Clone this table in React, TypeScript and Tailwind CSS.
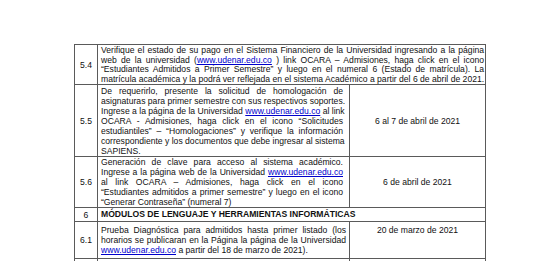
import React from "react";

type Kids = { children?: React.ReactNode };

// enlace azul subrayado como en el documento
const Url = ({ children }: Kids) => (
  <span className="text-[#0000cc] underline decoration-[0.5px] underline-offset-1">{children}</span>
);

// linea justificada (todas menos la ultima del parrafo)
const J = ({ children }: Kids) => (
  <div className="whitespace-nowrap text-justify [text-align-last:justify]">{children}</div>
);

const L = ({ children }: Kids) => <div className="whitespace-nowrap">{children}</div>;

const Num = ({ children, top }: Kids & { top?: boolean }) => (
  <div
    className={
      "w-[23px] shrink-0 border-r border-[#5a5a5a] flex justify-center " +
      (top ? "items-start" : "items-center")
    }
  >
    {children}
  </div>
);

const App: React.FC = () => {
  return (
    <div className="w-[533px] h-[261px] overflow-hidden bg-white pt-[44px] pl-[74px] font-['Liberation_Sans',Arial,sans-serif] text-[8.6px] leading-[10px] text-[#111]">
      <div className="w-[412px] border-t border-l border-r border-[#5a5a5a]">
        {/* 5.4 */}
        <div className="flex h-[40px] border-b border-[#5a5a5a]">
          <Num>5.4</Num>
          <div className="flex-1 pl-[3px] pr-[2px] pt-[1px] leading-[9.6px]">
            <J>
              Verifique el estado de su pago en el Sistema Financiero de la Universidad ingresando a la página
            </J>
            <J>
              web de la universidad (<Url>www.udenar.edu.co</Url> ) link OCARA – Admisiones, haga click en el icono
            </J>
            <J>
              “Estudiantes Admitidos a Primer Semestre” y luego en el numeral 6 (Estado de matrícula). La
            </J>
            <L>
              matrícula académica y la podrá ver reflejada en el sistema Académico a partir del 6 de abril de 2021.
            </L>
          </div>
        </div>

        {/* 5.5 */}
        <div className="flex h-[72px] border-b border-[#5a5a5a]">
          <Num>5.5</Num>
          <div className="w-[252px] shrink-0 border-r border-[#5a5a5a] pl-[3px] pr-[6px] pt-[1px]">
            <J>De requerirlo, presente la solicitud de homologación de</J>
            <J>asignaturas para primer semestre con sus respectivos soportes.</J>
            <J>
              Ingrese a la página de la Universidad <Url>www.udenar.edu.co</Url> al link
            </J>
            <J>OCARA - Admisiones, haga click en el icono “Solicitudes</J>
            <J>estudiantiles” – “Homologaciones” y verifique la información</J>
            <J>correspondiente y los documentos que debe ingresar al sistema</J>
            <L>SAPIENS.</L>
          </div>
          <div className="flex-1 flex items-center justify-center">6 al 7 de abril de 2021</div>
        </div>

        {/* 5.6 */}
        <div className="flex h-[51px] border-b border-[#5a5a5a]">
          <Num>5.6</Num>
          <div className="w-[252px] shrink-0 border-r border-[#5a5a5a] pl-[3px] pr-[6px]">
            <J>Generación de clave para acceso al sistema académico.</J>
            <J>
              Ingrese a la página web de la Universidad <Url>www.udenar.edu.co</Url>
            </J>
            <J>al link OCARA – Admisiones, haga click en el icono</J>
            <J>“Estudiantes admitidos a primer semestre” y luego en el icono</J>
            <L>“Generar Contraseña” (numeral 7)</L>
          </div>
          <div className="flex-1 flex items-center justify-center">6 de abril de 2021</div>
        </div>

        {/* 6 */}
        <div className="flex h-[14px] border-b border-[#5a5a5a]">
          <Num>6</Num>
          <div className="flex-1 pl-[3px] pt-[1px] font-bold whitespace-nowrap">
            MÓDULOS DE LENGUAJE Y HERRAMIENTAS INFORMÁTICAS
          </div>
        </div>

        {/* 6.1 */}
        <div className="flex h-[37px] border-b border-[#5a5a5a]">
          <Num>6.1</Num>
          <div className="w-[252px] shrink-0 border-r border-[#5a5a5a] pl-[3px] pr-[3px] pt-[3px]">
            <J>Prueba Diagnóstica para admitidos hasta primer listado (los</J>
            <J>horarios se publicaran en la Página la página de la Universidad</J>
            <L>
              <Url>www.udenar.edu.co</Url> a partir del 18 de marzo de 2021).
            </L>
          </div>
          <div className="flex-1 flex justify-center pt-[3px]">20 de marzo de 2021</div>
        </div>

        {/* 6.2 (cortada) */}
        <div className="flex h-[30px]">
          <Num>6.2</Num>
          <div className="w-[252px] shrink-0 border-r border-[#5a5a5a] pl-[3px] pt-[2px]">
            <L>Inicio de clases primer semestre.</L>
          </div>
          <div className="flex-1 flex justify-center pt-[2px]">22 de marzo de 2021</div>
        </div>
      </div>
    </div>
  );
};

export default App;
